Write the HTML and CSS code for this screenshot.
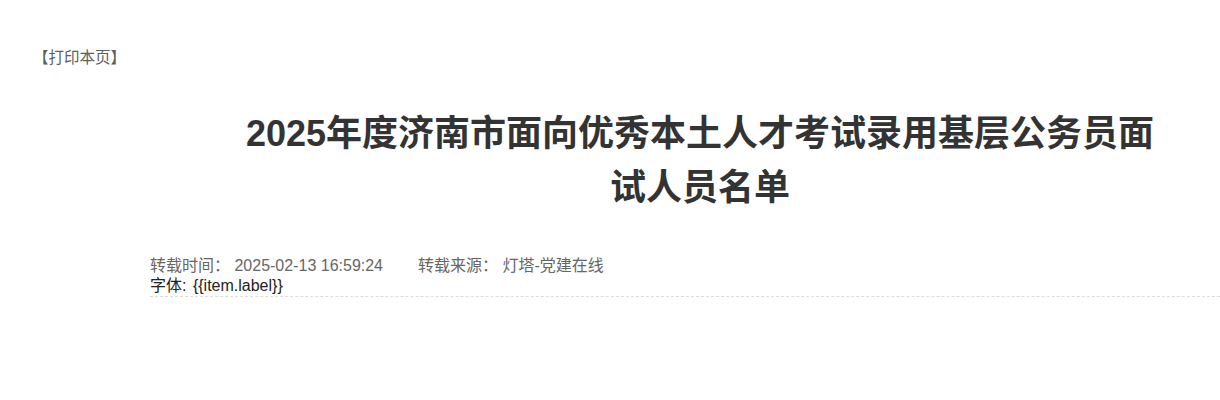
FILE: index.html
```html
<!DOCTYPE html>
<html lang="zh-CN">
<head>
<meta charset="utf-8">
<title>2025年度济南市面向优秀本土人才考试录用基层公务员面试人员名单</title>
<link rel="stylesheet" href="styles.css">
</head>
<body>
<div class="page">
  <div class="print-bar"><a class="print-link" href="#">【打印本页】</a></div>
  <div class="article">
    <h1 class="title">2025年度济南市面向优秀本土人才考试录用基层公务员面试人员名单</h1>
    <div class="meta">
      <div class="meta-row">
        <span class="meta-item">转载时间： 2025-02-13 16:59:24</span>
        <span class="meta-item">转载来源： 灯塔-党建在线</span>
      </div>
      <div class="font-row">字体:&nbsp;{{item.label}}</div>
    </div>
  </div>
</div>
</body>
</html>
```
FILE: styles.css
```css
html, body {
  margin: 0;
  padding: 0;
  background: #fff;
  overflow: hidden;
}
body {
  font-family: "Liberation Sans", Arial, "Noto Sans CJK SC", sans-serif;
  color: #333;
}
.page {
  width: 1250px;
}
.print-bar {
  padding: 48px 0 0 33px;
  height: 20px;
}
.print-link {
  font-size: 15.5px;
  line-height: 20px;
  color: #5e5e5e;
  text-decoration: none;
}
.article {
  margin-left: 150px;
  width: 1100px;
}
.title {
  margin: 39px 0 0;
  padding: 0 90px;
  font-size: 36px;
  line-height: 54px;
  font-weight: bold;
  color: #333;
  text-align: center;
}
.meta {
  margin-top: 41px;
  border-bottom: 1px dashed #ddd;
}
.meta-row {
  display: flex;
  gap: 35px;
  font-size: 16px;
  line-height: 20px;
  color: #666;
}
.font-row {
  font-size: 16px;
  line-height: 20px;
  color: #222;
  word-spacing: 2px;
}
```
